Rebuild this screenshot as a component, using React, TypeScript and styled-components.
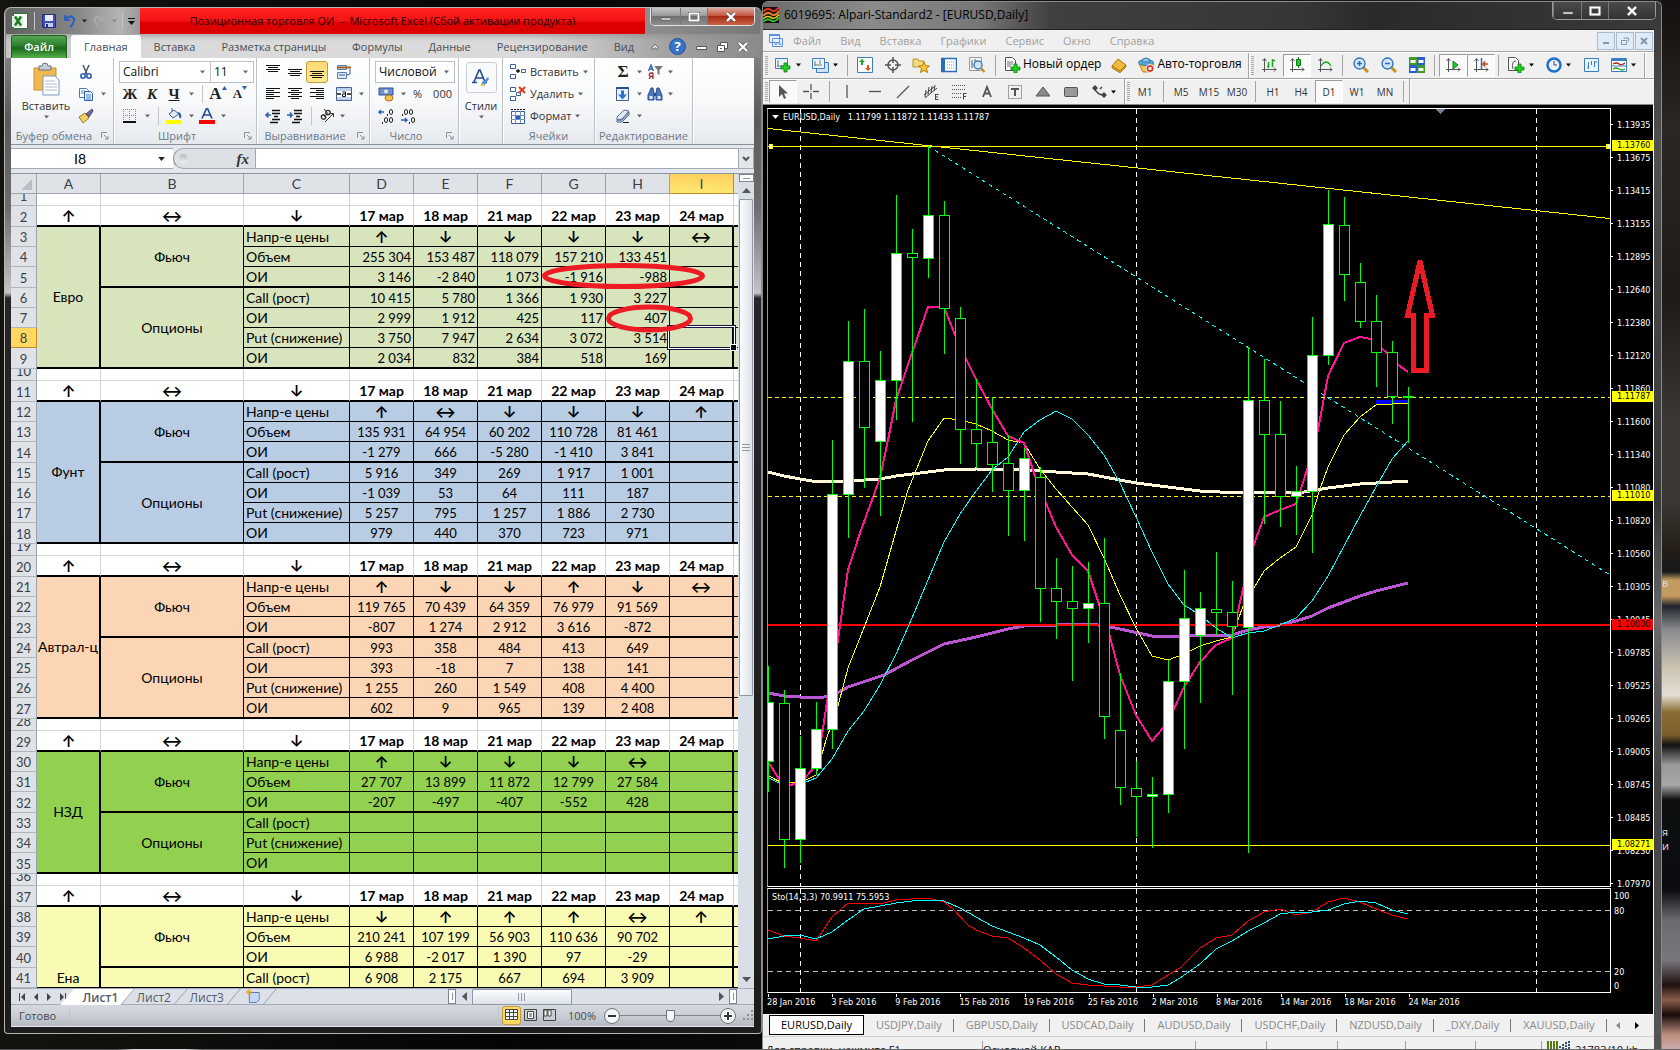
import React from 'react';
import styled, { createGlobalStyle, css } from 'styled-components';

const ui = `'Open Sans', 'Noto Sans', sans-serif`;
const sheetFont = `Lato, 'Open Sans', sans-serif`;
const chartFont = `'DejaVu Sans Condensed', 'DejaVu Sans', sans-serif`;

const GlobalStyle = createGlobalStyle`
  * { box-sizing: border-box; }
  html, body { margin: 0; padding: 0; background: #0a0a09; }
  button, input, select { font: inherit; color: inherit; margin: 0; padding: 0; border: 0; background: none; border-radius: 0; }
  svg { display: block; flex: none; }
`;

/* ---------- desktop ---------- */

const Desktop = styled.div`
  display: flex;
  flex-direction: column;
  height: 100vh;
  overflow: hidden;
  background: linear-gradient(90deg, #14130f, #050505 30%, #1d1c1a);
  font: 11px/16px ${ui};
`;
const Workspace = styled.div`
  display: flex;
  align-items: flex-start;
  flex: 1;
  min-height: 0;
  overflow: hidden;
`;
const TaskbarEdge = styled.div`
  height: 1px;
  background: linear-gradient(90deg, #555 0 7%, #ddd 8% 11%, #666 12%);
`;
const Wallpaper = styled.aside`
  display: flex;
  flex-direction: column;
  flex: 0 0 18px;
  align-self: stretch;
  overflow: hidden;
  color: #ddd;
  background: linear-gradient(180deg, #14100f 0, #2c2722 130px, #1e1b18 300px, #3a3734 420px, #3c3733 500px, #241d18 550px, #17191d 572px, #c39a60 580px, #c39a60 596px, #20242c 606px, #8b8c90 630px, #cfc6b4 670px, #e4dfd4 695px, #8a6d35 712px, #7a5d2b 735px, #111 745px, #999 765px, #a8a8a8 785px, #0d0e10 800px, #0c0d10 890px, #6a6a70 920px, #77777c 960px, #201010 985px, #8b5c4b 1000px, #160a08 1015px, #c09080 1035px, #caa);
`;
const WallpaperNote = styled.span<{ $gap: number }>`
  margin-top: ${p => p.$gap}px;
  line-height: 14px;
`;

/* ---------- excel frame ---------- */

const ExcelWindow = styled.section`
  flex: 0 0 758px;
  min-width: 0;
  margin: 7px 0 0 4px;
  padding: 0 7px 6px 6px;
  border: 1px solid #b5b5b5;
  border-right-color: #8d8d8d;
  border-radius: 7px 7px 4px 4px;
  background: linear-gradient(180deg, #777 0, #8c8c8c 30px, #5a5a5a 110px, #6d6d6d 200px, #c4c4c4 285px, #262626 290px, #1c1c1c);
`;
const ExcelTitle = styled.header`
  display: flex;
  height: 26px;
  margin: 0 -6px 0 -5px;
  padding: 0 5px 0 6px;
  border-radius: 6px 6px 0 0;
  background: linear-gradient(90deg, #5f5f5f, #8a8a8a 10%, #b4b4b4 15%, #8d8d8d 19%, #8d8d8d 86%, #777);
`;
const QuickBar = styled.div`
  display: flex;
  align-items: center;
  gap: 3px;
  flex: 0 0 128px;
`;
const RedTitle = styled.h1`
  flex: 1;
  margin: 0;
  padding-right: 20px;
  text-align: center;
  white-space: nowrap;
  font: 11px/26px ${ui};
  color: #1c0404;
  background: linear-gradient(180deg, #ff2323, #f51313 50%, #dd0000 55%, #dc0000);
`;
const CaptionButtons = styled.div`
  display: flex;
  height: 18px;
  margin-left: 5px;
  border: 1px solid #e3e3e3;
  border-top: 0;
  border-radius: 0 0 5px 5px;
  overflow: hidden;
`;
const CaptionButton = styled.button<{ $w: number; $tone?: 'red' | 'glass' }>`
  display: grid;
  place-items: center;
  width: ${p => p.$w}px;
  border-left: 1px solid #777;
  background: ${p =>
    p.$tone === 'red'
      ? 'linear-gradient(180deg, #d9a79c, #c4563f 45%, #a92a12 50%, #c8644a)'
      : p.$tone === 'glass'
      ? 'linear-gradient(180deg, #4a4a4a, #333)'
      : 'linear-gradient(180deg, #c5c5c5, #9a9a9a 45%, #707070 50%, #8e8e8e)'};
`;
const Strip = styled.nav`
  display: flex;
  align-items: flex-end;
  height: 24px;
  margin: 0 -6px 0 -5px;
  padding: 0 11px 0 5px;
  background: linear-gradient(90deg, #c6c6c6, #dadada 20%, #dadada 70%, #a2a2a2 88%, #8a8a8a);
  box-shadow: inset 0 5px 6px -4px #8d8d8d;
`;
const FileTab = styled.button`
  flex: 0 0 56px;
  height: 23px;
  border: 1px solid #1f5f20;
  border-bottom: 0;
  border-radius: 3px 3px 0 0;
  color: #fff;
  font-weight: 600;
  background: linear-gradient(180deg, #55a655, #2b7d2b 45%, #17691a 55%, #58b04a);
`;
const RibbonTab = styled.button<{ $on?: boolean }>`
  flex: none;
  height: 23px;
  padding: 0 13px;
  white-space: nowrap;
  color: #4a4e55;
  border-radius: 3px 3px 0 0;
  ${p => p.$on && css`background: #fff; margin-left: 4px;`}
`;
const StripTools = styled.div`
  display: flex;
  align-items: center;
  gap: 9px;
  height: 23px;
  margin-left: auto;
`;

/* ---------- ribbon ---------- */

const Ribbon = styled.div`
  display: flex;
  height: 87px;
  background: linear-gradient(180deg, #fff, #f8f9fb 50%, #e5e9ee);
  border-bottom: 1px solid #8b9097;
`;
const Group = styled.section<{ $w: number }>`
  display: flex;
  flex-direction: column;
  flex: 0 0 ${p => p.$w}px;
  padding-top: 3px;
  border-right: 1px solid #bcc2ca;
  box-shadow: 1px 0 0 #fff;
`;
const GroupBody = styled.div<{ $pad?: number }>`
  display: flex;
  height: 66px;
  padding-left: ${p => p.$pad ?? 5}px;
`;
const GroupLabel = styled.div`
  display: flex;
  align-items: center;
  height: 17px;
  padding: 0 4px;
  color: #6d7787;
  white-space: nowrap;
  span { flex: 1; text-align: center; }
  svg { margin-left: 8px; }
`;
const Stack = styled.div`
  display: flex;
  flex-direction: column;
`;
const Line = styled.div`
  display: flex;
  align-items: center;
  height: 22px;
`;
const IconButton = styled.button<{ $w?: number; $on?: boolean }>`
  display: flex;
  align-items: center;
  justify-content: center;
  width: ${p => p.$w ?? 22}px;
  height: 22px;
  ${p =>
    p.$on &&
    css`
      border: 1px solid #c29b3a;
      border-radius: 3px;
      background: linear-gradient(180deg, #fdd978, #ffe88c);
    `}
`;
const LetterButton = styled(IconButton)<{ $size?: number; $italic?: boolean; $under?: boolean }>`
  font: bold ${p => p.$size ?? 15}px/20px 'Liberation Serif', serif;
  font-style: ${p => (p.$italic ? 'italic' : 'normal')};
  text-decoration: ${p => (p.$under ? 'underline' : 'none')};
  color: #222;
  svg { align-self: flex-start; margin-top: 3px; }
`;
const TextButton = styled.button`
  display: flex;
  align-items: center;
  gap: 4px;
  height: 22px;
  color: #333;
  white-space: nowrap;
`;
const BigButton = styled.button<{ $w: number }>`
  display: flex;
  flex-direction: column;
  align-items: center;
  width: ${p => p.$w}px;
  color: #333;
  line-height: 18px;
`;
const StyleTile = styled.span`
  display: grid;
  place-items: center;
  width: 31px;
  height: 31px;
  margin: 1px 0 4px;
  border: 1px solid #c9ced6;
  border-radius: 3px;
  background: #f9fafc;
`;
const Rule = styled.span<{ $w?: number }>`
  width: ${p => p.$w ?? 10}px;
  height: 18px;
  background: linear-gradient(#c2c6cc, #c2c6cc) center / 1px 100% no-repeat;
`;
const Space = styled.span<{ $w: number }>`
  width: ${p => p.$w}px;
`;
const ComboBox = styled.span<{ $w: number }>`
  position: relative;
  display: flex;
  width: ${p => p.$w}px;
  height: 22px;
  border: 1px solid #bcc0c7;
  background: #fff;
  font-size: 12px;
  & + & { margin-left: -1px; }
  select { flex: 1; min-width: 0; padding-left: 3px; appearance: none; color: #111; outline: 0; }
  svg { position: absolute; right: 5px; top: 8px; pointer-events: none; }
`;

/* ---------- formula bar ---------- */

const FormulaBar = styled.div`
  display: flex;
  height: 29px;
  padding: 3px 0 4px;
  background: #e3e7f1;
  border-bottom: 1px solid #8f959e;
`;
const NameBox = styled.input`
  width: 138px;
  text-align: center;
  font: 14px/20px ${sheetFont};
  background: #fff;
  border: solid #a4a9b1;
  border-width: 1px 0;
  outline: 0;
`;
const NameArrow = styled.button`
  display: grid;
  place-items: center;
  width: 24px;
  background: #fff;
  border: solid #a4a9b1;
  border-width: 1px 0;
`;
const FxArea = styled.div`
  display: flex;
  align-items: center;
  justify-content: space-between;
  width: 83px;
  padding: 0 6px 0 2px;
  background: #dde1e6;
  border: 1px solid #a4a9b1;
  border-left-color: #8a8f98;
  border-radius: 11px 0 0 11px;
  font: italic bold 15px/20px 'Liberation Serif', serif;
  color: #333;
`;
const Bead = styled.span`
  width: 9px;
  height: 9px;
  margin-left: 3px;
  border-radius: 50%;
  background: linear-gradient(#b5b8bd, #f3f3f3);
`;
const FormulaInput = styled.input`
  flex: 1;
  min-width: 0;
  background: #fff;
  border: solid #a4a9b1;
  border-width: 1px 0;
  outline: 0;
`;
const ExpandButton = styled.button`
  display: grid;
  place-items: center;
  width: 16px;
  background: #e3e7ec;
  border: 1px solid #a4a9b1;
`;

/* ---------- sheet ---------- */

const SheetArea = styled.div`
  position: relative;
  display: flex;
  height: 814px;
  overflow: hidden;
  background: #fff;
`;
const SheetClip = styled.div`
  flex: 1;
  min-width: 0;
  overflow: hidden;
`;
const Grid = styled.table`
  width: 728px;
  table-layout: fixed;
  border-collapse: separate;
  border-spacing: 0;
  font: 14px/18px ${sheetFont};
  color: #000;
  td, th { padding: 0; }
`;
const ColHead = styled.th<{ $on?: boolean }>`
  height: 20px;
  font-weight: normal;
  color: ${p => (p.$on ? '#2c5a44' : '#3b4047')};
  background: ${p => (p.$on ? 'linear-gradient(180deg, #ffcf5c, #ffe873)' : '#dfe3e8')};
  border-right: 1px solid ${p => (p.$on ? '#c08a2c' : '#9da3ab')};
  border-bottom: 1px solid ${p => (p.$on ? '#c08a2c' : '#9da3ab')};
`;
const RowHead = styled.th<{ $h: number; $on?: boolean }>`
  height: ${p => p.$h}px;
  font-size: 13px;
  font-weight: normal;
  color: #3b4047;
  background: ${p => (p.$on ? '#ffd85f' : '#dfe3e8')};
  border-right: 1px solid ${p => (p.$on ? '#c08a2c' : '#9da3ab')};
  border-bottom: 1px solid ${p => (p.$on ? '#c08a2c' : '#b1b6bd')};
  vertical-align: bottom;
  div { display: flex; align-items: flex-end; justify-content: center; height: ${p => p.$h - 1}px; overflow: hidden; }
`;
const PlainCell = styled.td<{ $last?: boolean; $thick?: boolean; $bold?: boolean }>`
  border-right: 1px solid #d4d4d4;
  border-bottom: ${p => (p.$thick ? '2px solid #000' : '1px solid #d4d4d4')};
  ${p => p.$last && 'border-right: 0;'}
  text-align: center;
  vertical-align: bottom;
  line-height: 18px;
  font-weight: ${p => (p.$bold ? 'bold' : 'normal')};
`;
const Cell = styled.td<{ $bg: string; $align?: string; $thickBottom?: boolean; $right?: number; $valign?: string; $num?: boolean }>`
  position: relative;
  background: ${p => p.$bg};
  border-right: ${p => p.$right ?? 1}px solid #000;
  border-bottom: ${p => (p.$thickBottom ? 2 : 1)}px solid #000;
  && { padding: ${p => (p.$align === 'left' ? '0 0 0 2px' : p.$align === 'right' ? '0 2px 0 0' : '0')}; }
  text-align: ${p => p.$align ?? 'center'};
  vertical-align: ${p => p.$valign ?? 'bottom'};
  white-space: nowrap;
  ${p => p.$num && 'font-size: 13px;'}
`;
const Arrow = styled.span`
  display: block;
  font: 600 16px/18px Inter, 'DejaVu Sans', sans-serif;
`;
const CellCursor = styled.span`
  position: absolute;
  z-index: 1;
  inset: -2px -3px -2px -2px;
  border: 1px solid #fff;
  outline: 1px solid #1c1440;
  box-shadow: inset 0 0 0 1px #1c1440;
  &::after {
    content: '';
    position: absolute;
    right: -3px;
    bottom: -3px;
    width: 5px;
    height: 5px;
    background: #000;
    border: 1px solid #fff;
  }
`;
const Ink = styled.svg`
  position: absolute;
  z-index: 2;
  left: 0;
  top: 0;
  pointer-events: none;
`;
const VScroll = styled.div`
  display: flex;
  flex-direction: column;
  align-items: center;
  flex: 0 0 16px;
  background: #d9dfe9;
`;
const SplitHandle = styled.span<{ $vertical?: boolean }>`
  flex: none;
  width: ${p => (p.$vertical ? 8 : 15)}px;
  height: ${p => (p.$vertical ? 15 : 8)}px;
  border: 1px solid #7f858e;
  background: linear-gradient(#8e949e, #8e949e) center / ${p => (p.$vertical ? '1px 7px' : '7px 1px')} no-repeat #fff;
`;
const ScrollArrow = styled.button<{ $w?: number; $h?: number }>`
  display: grid;
  place-items: center;
  flex: none;
  width: ${p => p.$w ?? 16}px;
  height: ${p => p.$h ?? 17}px;
`;
const Thumb = styled.div<{ $dir: 'v' | 'h' }>`
  display: grid;
  place-items: center;
  border: 1px solid #8e97a6;
  border-radius: 1px;
  ${p =>
    p.$dir === 'v'
      ? 'width: 14px; flex: 0 0 497px; background: linear-gradient(90deg, #fbfcfd, #dde2ea);'
      : 'height: 16px; flex: 0 0 100px; background: linear-gradient(180deg, #fbfcfd, #dde2ea);'}
`;
const Filler = styled.div`
  flex: 1;
`;

const SheetBar = styled.div`
  display: flex;
  align-items: center;
  height: 17px;
  color: #555b66;
  background: #dbe0e9;
  border-top: 1px solid #a5abb5;
  border-bottom: 1px solid #a5abb5;
`;
const SheetNav = styled.div`
  display: flex;
  justify-content: space-around;
  width: 64px;
  padding: 0 5px 0 4px;
`;
const SheetTab = styled.button<{ $on?: boolean; $w?: number }>`
  flex: none;
  height: 16px;
  width: ${p => p.$w ?? 53}px;
  font-size: 12px;
  line-height: 15px;
  border-right: 1px solid #9aa0aa;
  transform: skewX(-40deg);
  ${p => p.$on && css`
    background: #fff;
    font-weight: 600;
    box-shadow: -8px 0 0 #fff;
  `}
  span { display: inline-block; transform: skewX(40deg); }
`;
const StatusBar = styled.footer`
  display: flex;
  align-items: center;
  height: 22px;
  padding-left: 8px;
  color: #444a54;
  background: linear-gradient(180deg, #d6dae0, #c9cdd4 50%, #b5bac2);
  border-bottom: 1px solid #e8eaee;
`;
const ViewButton = styled.button<{ $on?: boolean }>`
  display: grid;
  place-items: center;
  width: 19px;
  height: 19px;
  ${p => p.$on && 'background: #ffd966; border: 1px solid #c29b3a; border-radius: 3px;'}
`;
const RoundButton = styled.button`
  display: grid;
  place-items: center;
  width: 16px;
  height: 16px;
  border: 1px solid #6d737c;
  border-radius: 50%;
  background: #f3f4f6;
`;
const ZoomSlider = styled.input`
  width: 100px;
  height: 14px;
  appearance: none;
  background: linear-gradient(#80858e, #80858e) center / 100% 1px no-repeat;
  &::-webkit-slider-thumb {
    appearance: none;
    width: 9px;
    height: 12px;
    background: #f4f5f7;
    border: 1px solid #6d737c;
    border-radius: 1px 1px 5px 5px;
  }
`;

/* ---------- trading terminal ---------- */

const Terminal = styled.section`
  flex: 1;
  min-width: 0;
  margin-top: 1px;
  padding: 0 7px 0 0;
  border: 1px solid #8a8a8a;
  border-bottom: 0;
  border-radius: 6px 6px 0 0;
  background: linear-gradient(180deg, #3a3a3a, #505050 150px, #383838 500px, #6a6a6a 620px, #444 800px, #555);
`;
const TermTitle = styled.header`
  display: flex;
  align-items: flex-start;
  height: 27px;
  margin-right: -7px;
  border-radius: 5px 5px 0 0;
  background: linear-gradient(90deg, #6b6b6b 0, #8b8b8b 12%, #777 24%, #404040 32%, #363636 60%, #2a2a2a 68%, #3a3a3a);
  > svg { margin: 5px 5px 0 0; }
`;
const TermName = styled.h2`
  flex: 1;
  margin: 0;
  font: 12px/25px ${ui};
  color: #000;
`;
const TermCaption = styled(CaptionButtons)`
  margin-right: 5px;
  border-color: #9a9a9a;
`;
const Client = styled.div`
  background: #f0f0f0;
  border-top: 1px solid #222;
`;
const MenuBar = styled.nav`
  display: flex;
  align-items: center;
  height: 21px;
  padding-left: 5px;
  background: #f0f0f0;
`;
const MenuItem = styled.button`
  padding: 0 9px 0 10px;
  color: #a0a0a0;
`;
const MdiButtons = styled.div`
  display: flex;
  margin-left: auto;
`;
const MdiButton = styled.button`
  display: grid;
  place-items: center;
  width: 18px;
  height: 18px;
  margin-right: 1px;
  border: 1px solid #a9bccf;
  background: #dfebf6;
`;
const ToolRow = styled.div<{ $h: number }>`
  display: flex;
  align-items: center;
  height: ${p => p.$h}px;
  border-top: 1px solid #a5a5a5;
  box-shadow: inset 0 1px 0 #fff;
`;
const ToolGroup = styled.div`
  display: flex;
  align-items: center;
  height: 25px;
  padding-right: 2px;
  border-right: 1px solid #a5a5a5;
  box-shadow: 1px 0 0 #fff;
`;
const Grip = styled.span`
  width: 3px;
  height: 19px;
  margin: 0 1px 0 2px;
  background: repeating-linear-gradient(180deg, #a8a8a8 0 1px, #f0f0f0 1px 2px);
`;
const Tool = styled.button<{ $on?: boolean; $drop?: boolean }>`
  display: flex;
  align-items: center;
  justify-content: center;
  gap: 4px;
  width: ${p => (p.$drop ? 37 : 28)}px;
  height: 23px;
  ${p =>
    p.$on &&
    css`
      border: 1px solid;
      border-color: #9d9d9d #fff #fff #9d9d9d;
      background: #fafafa;
    `}
`;
const WideTool = styled.button`
  display: flex;
  align-items: center;
  gap: 2px;
  height: 23px;
  padding: 0 4px 3px 5px;
  font-size: 12px;
  white-space: nowrap;
  color: #000;
  svg { margin-top: 3px; }
`;
const Period = styled(Tool)`
  font: 10px/14px ${ui};
  color: #333;
`;
const ToolRule = styled.span`
  width: 8px;
  height: 21px;
  background: linear-gradient(#a5a5a5, #a5a5a5) center / 1px 100% no-repeat;
`;

/* ---------- chart ---------- */

const ChartFrame = styled.div`
  display: grid;
  grid-template-columns: minmax(0, 1fr) 42px;
  grid-template-rows: 779px 105px 20px;
  row-gap: 1px;
  padding: 3px 0 0 4px;
  color: #fff;
  background: #000;
  border-top: 1px solid #888;
  border-right: 1px solid #fff;
  font: 9px/12px ${chartFont};
`;
const Pane = styled.div`
  position: relative;
  border: 1px solid #fff;
  border-left-color: #999;
  > svg { width: 100%; height: 100%; }
`;
const PaneCaption = styled.div`
  position: absolute;
  left: 4px;
  top: 2px;
  display: flex;
  align-items: center;
  gap: 4px;
  white-space: pre;
`;
const PriceAxis = styled.div`
  position: relative;
`;
const Price = styled.div`
  display: flex;
  align-items: center;
  height: 33px;
  &::before { content: ''; width: 2px; height: 1px; margin-right: 4px; background: #fff; }
`;
const PriceTag = styled.span<{ $bg: string }>`
  position: absolute;
  left: 1px;
  right: 0;
  padding-left: 5px;
  line-height: 11px;
  color: #000;
  background: ${p => p.$bg};
`;
const LevelTag = styled.span`
  position: absolute;
  left: 3px;
`;
const DateAxis = styled.div`
  display: flex;
  line-height: 10px;
`;
const DateLabel = styled.span`
  flex: 0 0 7.6%;
  width: 0;
  white-space: nowrap;
  &::before { content: ''; display: block; width: 1px; height: 3px; margin-left: 1px; background: #fff; }
`;
const SymbolTabs = styled.nav`
  display: flex;
  align-items: stretch;
  height: 22px;
  padding-left: 6px;
  color: #8a8a8a;
  background: #f0f0f0;
  border-top: 1px solid #fff;
`;
const SymbolTab = styled.button<{ $on?: boolean }>`
  position: relative;
  flex: 0 0 auto;
  height: 20px;
  padding: 0 12px;
  ${p =>
    p.$on
      ? 'padding: 0 11px; color: #000; background: #fff; border: 1px solid #000;'
      : '&::after { content: ""; position: absolute; right: 0; top: 4px; height: 13px; width: 1px; background: #777; }'}
`;
const TermStatus = styled.footer`
  display: flex;
  height: 22px;
  padding: 4px 0 0 3px;
  line-height: 18px;
  color: #111;
  border-top: 1px solid #d0d0d0;
  white-space: nowrap;
`;
const StatusCell = styled.span<{ $w: number }>`
  display: flex;
  gap: 4px;
  flex: 0 0 ${p => p.$w}px;
  border-right: 1px solid #a0a0a0;
`;

/* ---------- icons ---------- */

const Caret = ({ c = '#666', w = 5 }: { c?: string; w?: number }) => (
  <svg width={w} height="4" viewBox="0 0 5 3"><path d="M0 0h5L2.5 3z" fill={c} /></svg>
);
const Ico = ({ s = 16, w, children }: { s?: number; w?: number; children: React.ReactNode }) => (
  <svg width={w ?? s} height={s} viewBox={`0 0 ${w ?? s} ${s}`} fill="none">{children}</svg>
);
const DropArrow = ({ w = 12 }: { w?: number }) => <IconButton $w={w} aria-label="Список"><Caret /></IconButton>;
const Launcher = () => (
  <Ico s={8}><path d="M.5 6V.5H6M3 3l4 4M7 4v3H4" stroke="#8a909a" /></Ico>
);
const Bars = ({ rows, y = 2 }: { rows: number[][]; y?: number }) => (
  <Ico s={16}>{rows.map((r, i) => <path key={i} d={`M${r[0]} ${y + i * 2 + 0.5}H${r[1]}`} stroke="#111" />)}</Ico>
);
const Axes = ({ children }: { children?: React.ReactNode }) => (
  <Ico s={16}><path d="M3.5 2v13M1 12.5h14M1.5 4l2-2.5 2 2.5M13 10.5l2 2-2 2" stroke="#555" />{children}</Ico>
);
const Plus = ({ x, y }: { x: number; y: number }) => (
  <path d={`M${x} ${y}h3v3h3v3h-3v3h-3v-3h-3v-3h3z`} fill="#22d022" stroke="#0b7d14" strokeWidth=".8" />
);
const WinMin = () => <Ico s={8} w={12}><path d="M1 5h10v2H1z" fill="#fff" stroke="#555" strokeWidth=".7" /></Ico>;
const WinMax = () => <Ico s={10} w={12}><path d="M1.5 1.5h9v7h-9z" stroke="#555" strokeWidth="3" /><path d="M1.5 1.5h9v7h-9z" stroke="#fff" strokeWidth="2" /></Ico>;
const WinClose = () => <Ico s={10} w={12}><path d="M2 1l8 8M10 1l-8 8" stroke="#555" strokeWidth="3.6" /><path d="M2 1l8 8M10 1l-8 8" stroke="#fff" strokeWidth="2.4" /></Ico>;

/* ---------- sheet data ---------- */

type Row = { label: string; v: string[]; };
type Block = { name: string; bg: string; align: 'right' | 'center'; rows: Row[]; };
const days = ['17 мар', '18 мар', '21 мар', '22 мар', '23 мар', '24 мар'];
const r = (label: string, s = ''): Row => ({ label, v: s ? s.split('|') : ['', '', '', '', '', ''] });
const blocks: Block[] = [
  { name: 'Евро', bg: '#d8e4bc', align: 'right', rows: [
    r('Напр-е цены', '↑|↓|↓|↓|↓|↔'), r('Объем', '255 304|153 487|118 079|157 210|133 451|'), r('ОИ', '3 146|-2 840|1 073|-1 916|-988|'),
    r('Call (рост)', '10 415|5 780|1 366|1 930|3 227|'), r('ОИ', '2 999|1 912|425|117|407|'), r('Put (снижение)', '3 750|7 947|2 634|3 072|3 514|'), r('ОИ', '2 034|832|384|518|169|')] },
  { name: 'Фунт', bg: '#b8cce4', align: 'center', rows: [
    r('Напр-е цены', '↑|↔|↓|↓|↓|↑'), r('Объем', '135 931|64 954|60 202|110 728|81 461|'), r('ОИ', '-1 279|666|-5 280|-1 410|3 841|'),
    r('Call (рост)', '5 916|349|269|1 917|1 001|'), r('ОИ', '-1 039|53|64|111|187|'), r('Put (снижение)', '5 257|795|1 257|1 886|2 730|'), r('ОИ', '979|440|370|723|971|')] },
  { name: 'Автрал-ц', bg: '#fcd5b4', align: 'center', rows: [
    r('Напр-е цены', '↑|↓|↓|↑|↓|↔'), r('Объем', '119 765|70 439|64 359|76 979|91 569|'), r('ОИ', '-807|1 274|2 912|3 616|-872|'),
    r('Call (рост)', '993|358|484|413|649|'), r('ОИ', '393|-18|7|138|141|'), r('Put (снижение)', '1 255|260|1 549|408|4 400|'), r('ОИ', '602|9|965|139|2 408|')] },
  { name: 'НЗД', bg: '#92d050', align: 'center', rows: [
    r('Напр-е цены', '↑|↓|↓|↓|↔|'), r('Объем', '27 707|13 899|11 872|12 799|27 584|'), r('ОИ', '-207|-497|-407|-552|428|'),
    r('Call (рост)'), r('Put (снижение)'), r('ОИ')] },
  { name: 'Ена', bg: '#fafbb3', align: 'center', rows: [
    r('Напр-е цены', '↓|↑|↑|↑|↔|↑'), r('Объем', '210 241|107 199|56 903|110 636|90 702|'), r('ОИ', '6 988|-2 017|1 390|97|-29|'),
    r('Call (рост)', '6 908|2 175|667|694|3 909|')] },
];

const NumHead = ({ n, h }: { n: number; h: number }) => (
  <RowHead scope="row" $h={h} $on={n === 8}><div>{n}</div></RowHead>
);

function SheetBlock({ b, start, partial }: { b: Block; start: number; partial?: boolean }) {
  const total = b.rows.length;
  return (
    <>
      <tr><NumHead n={start} h={12} />{Array.from({ length: 10 }, (_, i) => <PlainCell key={i} $last={i === 9} />)}</tr>
      <tr>
        <NumHead n={start + 1} h={21} />
        {['↑', '↔', '↓'].map(a => <PlainCell key={a} $thick><Arrow>{a}</Arrow></PlainCell>)}
        {days.map(d => <PlainCell key={d} $thick $bold>{d}</PlainCell>)}
        <PlainCell $thick $last />
      </tr>
      {b.rows.map((row, i) => {
        const thick = i === 2 || (!partial && i === total - 1);
        return (
          <tr key={i}>
            <NumHead n={start + 2 + i} h={thick ? 21 : 20} />
            {i === 0 && <Cell $bg={b.bg} rowSpan={total} $right={2} $thickBottom={!partial} $valign={partial ? 'bottom' : 'middle'}>{b.name}</Cell>}
            {i === 0 && <Cell $bg={b.bg} rowSpan={3} $thickBottom $valign="middle">Фьюч</Cell>}
            {i === 3 && <Cell $bg={b.bg} rowSpan={total - 3} $thickBottom={!partial} $valign="middle">{partial ? '' : 'Опционы'}</Cell>}
            <Cell $bg={b.bg} $align="left" $thickBottom={thick}>{row.label}</Cell>
            {row.v.map((v, c) => (
              <Cell key={c} $num $bg={b.bg} $align={i === 0 ? 'center' : b.align} $thickBottom={thick} $right={c === 5 ? 2 : 1}>
                {i === 0 && v ? <Arrow>{v}</Arrow> : v}
                {start + 2 + i === 8 && c === 5 && <CellCursor />}
              </Cell>
            ))}
            <Cell $bg={b.bg} $thickBottom={thick} $right={0} />
          </tr>
        );
      })}
    </>
  );
}

/* ---------- chart data: [wick top, wick bottom, body top, body bottom, rising] ---------- */

const candles: [number, number, number, number, number][] = [
  [666, 792, 702, 761, 1], [690, 868, 703, 839, 0], [736, 863, 768, 839, 1], [702, 775, 729, 768, 1], [440, 749, 494, 729, 1],
  [321, 538, 361, 494, 1], [309, 488, 361, 427, 0], [351, 516, 380, 441, 1], [195, 420, 253, 380, 1], [229, 422, 253, 257, 0],
  [146, 278, 215, 258, 1], [201, 354, 215, 308, 0], [307, 464, 318, 429, 0], [379, 468, 429, 443, 0], [397, 492, 442, 464, 0],
  [435, 536, 463, 490, 0], [448, 541, 458, 490, 1], [467, 622, 477, 588, 0], [558, 639, 588, 601, 0], [566, 681, 601, 608, 0],
  [562, 643, 603, 608, 1], [538, 739, 603, 716, 0], [673, 805, 730, 787, 0], [761, 837, 788, 796, 0], [777, 848, 794, 796, 1],
  [660, 813, 681, 794, 1], [570, 749, 618, 681, 1], [592, 703, 608, 635, 1], [552, 635, 609, 612, 0], [581, 695, 612, 626, 0],
  [347, 853, 400, 627, 1], [359, 524, 400, 434, 0], [401, 527, 434, 496, 0], [466, 535, 491, 496, 1], [317, 553, 355, 491, 1],
  [190, 365, 224, 355, 1], [197, 301, 225, 274, 0], [263, 328, 282, 321, 0], [295, 387, 321, 352, 0], [341, 424, 352, 396, 0],
  [387, 443, 396, 397, 0],
];
const purple = '768,693 784,696 800,697 816,698 832,696 848,687 884,675 912,660 944,644 976,637 1008,629 1024,626 1056,625 1072,624 1092,624 1104,626 1120,629 1152,636 1190,636 1216,635 1232,635 1248,630 1264,627 1280,625 1296,621 1312,616 1328,608 1344,602 1360,596 1376,591 1392,587 1408,583';
const cream = '768,472 784,476 800,479 812,481 848,481 880,479 896,476 912,474 944,470 976,469 1024,470 1056,472 1088,474 1104,477 1136,483 1168,487 1200,491 1240,493 1264,492 1304,492 1328,488 1360,484 1408,481';
const pink = '769,763 779,779 790,785 800,783 816,766 822,735 827,702 838,640 848,570 860,533 880,478 888,440 896,400 912,353 928,307 944,307 955,335 965,357 976,379 992,409 1008,436 1024,443 1035,476 1048,508 1056,527 1072,555 1088,571 1099,604 1110,637 1120,675 1136,715 1152,741 1163,728 1174,709 1184,687 1200,662 1216,645 1232,638 1240,602 1254,544 1264,517 1280,510 1296,504 1307,470 1318,430 1328,376 1344,343 1360,337 1371,339 1387,353 1397,364 1408,372';
const yellow = '769,776 784,784 806,780 816,775 826,740 838,706 848,668 865,625 880,587 896,531 908,490 928,441 944,418 960,420 976,424 992,431 1008,440 1024,443 1040,469 1056,489 1072,507 1088,525 1104,558 1120,595 1136,628 1152,656 1168,660 1184,654 1200,646 1216,641 1232,637 1243,606 1254,588 1264,571 1280,558 1296,547 1312,515 1320,489 1328,467 1344,435 1360,417 1376,405 1392,404 1408,402';
const cyan = '769,778 779,783 806,782 816,778 832,759 848,731 864,711 880,685 896,654 912,618 928,580 944,542 960,514 976,491 992,470 1008,457 1024,432 1040,420 1056,411 1072,419 1088,435 1104,455 1120,483 1136,517 1152,552 1168,584 1184,605 1200,615 1216,628 1232,638 1248,633 1264,631 1280,625 1296,618 1312,601 1328,576 1344,546 1360,516 1376,487 1392,459 1408,441';
const stoRed = '768,930 784,936 800,938 816,941 832,917 848,903 864,903 880,904 896,900 912,899 928,898 944,902 952,908 968,925 976,930 992,936 1008,938 1024,948 1040,960 1056,974 1072,983 1088,985 1104,986 1120,987 1136,987 1152,985 1168,975 1180,968 1200,948 1216,938 1232,935 1248,921 1264,912 1280,909 1296,915 1312,912 1328,902 1344,898 1360,902 1376,909 1392,915 1408,919';
const stoCyan = '768,939 784,936 800,935 816,939 832,932 848,920 864,909 880,906 896,903 912,901 928,900 944,901 960,908 976,917 992,926 1008,932 1024,938 1040,945 1056,957 1072,970 1088,979 1104,984 1120,985 1136,987 1152,987 1168,985 1180,978 1200,964 1216,949 1232,941 1248,931 1264,923 1280,914 1296,912 1312,912 1328,910 1344,904 1360,901 1376,903 1392,910 1408,914';
const prices = '13935 13675 13415 13155 12895 12640 12380 12120 11860 11600 11340 11080 10820 10560 10305 10045 09785 09525 09265 09005 08745 08485 08230 07970'.split(' ');
const dates = ['28 Jan 2016', '3 Feb 2016', '9 Feb 2016', '15 Feb 2016', '19 Feb 2016', '25 Feb 2016', '2 Mar 2016', '8 Mar 2016', '14 Mar 2016', '18 Mar 2016', '24 Mar 2016'];
const tags: [string, number, string][] = [['1.13760', 32, '#ff0'], ['1.11787', 283, '#ff0'], ['1.11010', 382, '#ff0'], ['1.10000', 511, '#f00'], ['1.08271', 731, '#ff0']];
const levels: [string, number][] = [['100', 2], ['80', 17], ['20', 78], ['0', 92]];

function PriceChart() {
  return (
    <svg viewBox="768 109 842 777" preserveAspectRatio="none" shapeRendering="crispEdges" fill="none" role="img" aria-label="EURUSD, Daily">
      {[800.5, 1136.5, 1536.5].map(x => <path key={x} d={`M${x} 109V886`} stroke="#fff" strokeDasharray="5 4" />)}
      <polyline points={cream} stroke="#fff8d8" strokeWidth="3" />
      <polyline points={purple} stroke="#ba55d3" strokeWidth="3" />
      <path d="M768 625H1610" stroke="#f00" strokeWidth="2" />
      <polyline points={cyan} stroke="#0ff" />
      <polyline points={yellow} stroke="#ff0" />
      <polyline points={pink} stroke="#ff1493" strokeWidth="2" />
      <path d="M768 397.5H1610M768 496.5H1610" stroke="#ff0" strokeDasharray="4 3" />
      <path d="M768 146.5H1610M768 845.5H1610M768 128.5L1610 218.5" stroke="#ff0" />
      <path d="M928 146L1610 575" stroke="#0ff" strokeDasharray="4 4" />
      <path d="M1376 402H1408" stroke="#00f" strokeWidth="4" />
      {candles.map(([t, b, o, c, up], i) => {
        const x = 768.5 + i * 16;
        return (
          <g key={i} stroke="#0f0">
            <path d={`M${x} ${t}V${b}`} />
            <rect x={x - 5} y={o + 0.5} width="10" height={c - o} fill={up ? '#fff' : '#000'} />
          </g>
        );
      })}
      <path d="M1376 405L1408 403" stroke="#ff0" />
      <path d="M769 144h3v4h-3zM1606 144h3v4h-3z" fill="#fff" stroke="#ff0" />
      <path d="M1436 109h9l-4.5 5z" fill="#708090" />
      <path d="M1420 261L1407.5 315.5H1413.5V370.5H1426.5V315.5H1432.5Z" stroke="#ed1c24" strokeWidth="5" />
    </svg>
  );
}

/* ---------- application windows ---------- */

function ExcelRibbon() {
  return (
    <Ribbon>
      <Group $w={103}>
        <GroupBody $pad={6}>
          <BigButton $w={58}>
            <Ico s={36} w={30}>
              <path d="M3 7h22v22H3z" fill="#f0b84e" stroke="#c98f35" /><path d="M8 5h3a3 3 0 016 0h3v4H8z" fill="#c9ced6" stroke="#6b7280" />
              <path d="M12 15h12l4 4v15H12z" fill="#fff" stroke="#7c9ac0" /><path d="M14 20h10M14 23h12M14 26h12M14 29h12" stroke="#a9bcd6" />
            </Ico>
            Вставить<Caret />
          </BigButton>
          <Stack>
            <Line><IconButton aria-label="Вырезать"><Ico><path d="M5 1l4 9M11 1L7 10" stroke="#44546e" strokeWidth="1.5" /><circle cx="5" cy="12" r="2.2" stroke="#2b5fb5" strokeWidth="1.6" /><circle cx="11" cy="12" r="2.2" stroke="#2b5fb5" strokeWidth="1.6" /></Ico></IconButton></Line>
            <Line><IconButton aria-label="Копировать"><Ico><path d="M1.5 2.5h7l2 2v7h-9z" fill="#fff" stroke="#4b78b8" /><path d="M6.5 5.5h6l2 2v7h-8z" fill="#e4eefb" stroke="#2b5fb5" /><path d="M8 9h5M8 11h5M8 13h5M3 5h4M3 7h3" stroke="#5a86c4" /></Ico></IconButton><DropArrow /></Line>
            <Line><IconButton aria-label="Формат по образцу"><Ico><path d="M1 9l6-4 4 5-6 5z" fill="#f2d06a" stroke="#9c7a20" /><path d="M8 6l6-5 1 2-4 6z" fill="#7a6a9c" stroke="#4f4570" /></Ico></IconButton></Line>
          </Stack>
        </GroupBody>
        <GroupLabel><span>Буфер обмена</span><Launcher /></GroupLabel>
      </Group>

      <Group $w={143}>
        <GroupBody>
          <Stack>
            <Line>
              <ComboBox $w={92}><select aria-label="Шрифт"><option>Calibri</option></select><Caret /></ComboBox>
              <ComboBox $w={44}><select aria-label="Размер шрифта"><option>11</option></select><Caret /></ComboBox>
            </Line>
            <Line>
              <LetterButton>Ж</LetterButton><LetterButton $italic>К</LetterButton><LetterButton $under>Ч</LetterButton><DropArrow />
              <Rule /><LetterButton $size={17}>A<Ico s={5}><path d="M0 4h5L2.5 0z" fill="#2b5fb5" /></Ico></LetterButton><LetterButton $size={13}>A<Ico s={5}><path d="M0 0h5L2.5 4z" fill="#2b5fb5" /></Ico></LetterButton>
            </Line>
            <Line>
              <IconButton aria-label="Границы"><Ico><path d="M1.5 1v13M13.5 1v13M7.5 1v13M1 1.5h13M1 7.5h13" stroke="#888" strokeDasharray="1 1" /><path d="M1 14h13" stroke="#111" strokeWidth="2" /></Ico></IconButton><DropArrow />
              <Rule /><IconButton aria-label="Цвет заливки"><Ico><path d="M3 6l5-4 5 4-6 4z" fill="#dfe9f6" stroke="#46618c" /><path d="M12 5q3 1 2 5" stroke="#2b5fb5" strokeWidth="2" /><path d="M6 4V0" stroke="#46618c" /><path d="M0 12h16v4H0z" fill="#ff0" /></Ico></IconButton><DropArrow />
              <IconButton aria-label="Цвет текста" $w={20}><Ico><path d="M3 10.5L7.5.5h1L13 10.5M5 7h6" stroke="#2a4f91" strokeWidth="1.7" /><path d="M0 12h16v4H0z" fill="#f00" /></Ico></IconButton><DropArrow />
            </Line>
          </Stack>
        </GroupBody>
        <GroupLabel><span>Шрифт</span><Launcher /></GroupLabel>
      </Group>

      <Group $w={113}>
        <GroupBody>
          <Stack>
            <Line>
              <IconButton aria-label="По верхнему краю"><Bars rows={[[1, 15], [3, 13], [1, 15], [3, 13]]} y={1} /></IconButton>
              <IconButton aria-label="По середине"><Bars rows={[[1, 15], [3, 13], [1, 15], [3, 13]]} y={5} /></IconButton>
              <IconButton $on aria-label="По нижнему краю"><Bars rows={[[1, 15], [3, 13], [1, 15], [3, 13]]} y={7} /></IconButton>
              <Space $w={5} />
              <IconButton aria-label="Перенос текста"><Ico><path d="M1.5 1.5h9v4h-9zM1.5 8.5h9v6h-9z" stroke="#5b7fb5" fill="#dfe9f6" /><path d="M1 3.5h14" stroke="#a35c2a" strokeWidth="2" /><path d="M14 5v5l-3 1M3 11h6" stroke="#2b5fb5" /></Ico></IconButton>
            </Line>
            <Line>
              <IconButton aria-label="По левому краю"><Bars rows={[[1, 15], [1, 9], [1, 15], [1, 9], [1, 15], [1, 9]]} /></IconButton>
              <IconButton aria-label="По центру"><Bars rows={[[1, 15], [4, 12], [1, 15], [4, 12], [1, 15], [4, 12]]} /></IconButton>
              <IconButton aria-label="По правому краю"><Bars rows={[[1, 15], [7, 15], [1, 15], [7, 15], [1, 15], [7, 15]]} /></IconButton>
              <Space $w={5} />
              <IconButton aria-label="Объединить"><Ico><path d="M.5 1.5h15v13H.5z" fill="#bcd0ea" stroke="#46618c" /><path d="M1 5h14v6H1z" fill="#fff" /><path d="M1 8h4M11 8h4" stroke="#111" strokeWidth="1.5" /><path d="M6.5 6h3v4.5h-3V8h3" stroke="#111" /></Ico></IconButton><DropArrow />
            </Line>
            <Line>
              <IconButton aria-label="Уменьшить отступ"><Ico><path d="M7 2.5h8M7 5.5h8M9 8.5h4M7 11.5h8M5 14.5h8" stroke="#111" strokeWidth="1.5" /><path d="M6 7H1l2.5-2.5M1 7l2.5 2.5" stroke="#2b5fb5" strokeWidth="1.5" /></Ico></IconButton>
              <IconButton aria-label="Увеличить отступ"><Ico><path d="M7 2.5h8M7 5.5h8M9 8.5h4M7 11.5h8M5 14.5h8" stroke="#111" strokeWidth="1.5" /><path d="M0 7h5L3 4.5M5 7L3 9.5" stroke="#2b5fb5" strokeWidth="1.5" /></Ico></IconButton>
              <Rule /><IconButton aria-label="Ориентация"><Ico><circle cx="4.5" cy="9" r="2.2" stroke="#333" strokeWidth="1.3" /><circle cx="9" cy="4.5" r="2.2" stroke="#333" strokeWidth="1.3" /><path d="M6 14l8-8M11 5.5h3.5V9M4 6l3 4M5 1l5 6" stroke="#333" /></Ico></IconButton><DropArrow w={8} />
            </Line>
          </Stack>
        </GroupBody>
        <GroupLabel><span>Выравнивание</span><Launcher /></GroupLabel>
      </Group>

      <Group $w={89}>
        <GroupBody>
          <Stack>
            <Line><ComboBox $w={80}><select aria-label="Числовой формат"><option>Числовой</option></select><Caret /></ComboBox></Line>
            <Line>
              <IconButton aria-label="Финансовый формат"><Ico><path d="M1 2h14v7H1z" fill="#6f93c9" stroke="#2a4f91" /><circle cx="8" cy="5.5" r="2" fill="#dfe9f6" /><ellipse cx="11" cy="12" rx="4" ry="3" fill="#f2c14e" stroke="#a8741a" /></Ico></IconButton><DropArrow />
              <Space $w={4} /><TextButton>%</TextButton><Space $w={11} /><TextButton>000</TextButton>
            </Line>
            <Line>
              <IconButton aria-label="Увеличить разрядность"><Ico><path d="M6 4H1l2-2M1 4l2 2" stroke="#2b5fb5" strokeWidth="1.3" /><ellipse cx="13" cy="4" rx="1.6" ry="2.5" stroke="#222" /><ellipse cx="8" cy="12" rx="1.6" ry="2.5" stroke="#222" /><ellipse cx="13" cy="12" rx="1.6" ry="2.5" stroke="#222" /><path d="M9.5 6v2M4.5 14v2" stroke="#222" /></Ico></IconButton>
              <IconButton aria-label="Уменьшить разрядность"><Ico><path d="M1 12h6l-2-2M7 12l-2 2" stroke="#2b5fb5" strokeWidth="1.3" /><ellipse cx="6" cy="4" rx="1.6" ry="2.5" stroke="#222" /><ellipse cx="11" cy="4" rx="1.6" ry="2.5" stroke="#222" /><ellipse cx="13" cy="12" rx="1.6" ry="2.5" stroke="#222" /><path d="M2.5 6v2M9.5 14v2" stroke="#222" /></Ico></IconButton>
            </Line>
          </Stack>
        </GroupBody>
        <GroupLabel><span>Число</span><Launcher /></GroupLabel>
      </Group>

      <Group $w={44}>
        <GroupBody $pad={4}>
          <BigButton $w={36}>
            <StyleTile><Ico s={20}><path d="M3 14L8 2h1l5 12M5 10h7M1 14.5h5M11 14.5h5" stroke="#2a4f91" strokeWidth="1.7" /><path d="M10 16l7-7 1 2-5 7z" fill="#4b8be0" /><path d="M9 18q2-4 4-2t-4 2z" fill="#f2c14e" /></Ico></StyleTile>
            Стили<Caret />
          </BigButton>
        </GroupBody>
      </Group>

      <Group $w={92}>
        <GroupBody $pad={7}>
          <Stack>
            <TextButton><Ico><path d="M.5.5h5v4h-5zM.5 10.5h5v4h-5zM11.5 5.5h4v3h-4z" fill="#fff" stroke="#3a5f9a" /><path d="M10 7H6M8 5v4" stroke="#111" strokeWidth="1.3" /></Ico>Вставить<Caret /></TextButton>
            <TextButton><Ico><path d="M.5 1.5h5v4h-5zM.5 10.5h5v4h-5zM6.5 6.5h4v3h-4z" fill="#fff" stroke="#3a5f9a" /><path d="M9 1l6 6M15 1L9 7" stroke="#e03a1a" strokeWidth="2" /></Ico>Удалить<Caret /></TextButton>
            <TextButton><Ico><path d="M1.5 3.5h13v12h-13z" fill="#fff" stroke="#3a5f9a" /><path d="M5.5 3v12M10.5 3v12M1 7.5h14M1 11.5h14" stroke="#6f93c9" /><path d="M6 8h4v3H6z" fill="#2b5fb5" /><path d="M1 1.5h14" stroke="#111" strokeDasharray="2 1" /></Ico>Формат<Caret /></TextButton>
          </Stack>
        </GroupBody>
        <GroupLabel><span>Ячейки</span></GroupLabel>
      </Group>

      <Group $w={95}>
        <GroupBody $pad={17}>
          <Stack>
            <Line>
              <LetterButton $size={17}>Σ</LetterButton><DropArrow w={10} />
              <IconButton aria-label="Сортировка"><Ico><path d="M1.5 7L4 1l2.5 6M2.5 5h3" stroke="#2b5fb5" strokeWidth="1.3" /><path d="M6 9v6M6 9H4a1.5 1.5 0 000 3.5h2M4 12l-2 3" stroke="#9c2a2a" strokeWidth="1.3" /><path d="M7 2h9l-3.5 4v5l-2-1V6z" fill="#777" /></Ico></IconButton><DropArrow w={8} />
            </Line>
            <Line>
              <IconButton aria-label="Заполнить"><Ico><path d="M1.5 1.5h12v13h-12z" fill="#eaf2fc" stroke="#46618c" /><path d="M1.5 2h12" stroke="#2a4f91" strokeWidth="2" /><path d="M6 4.5h3v4h3l-4.5 5L3 8.5h3z" fill="#2b6fd6" /></Ico></IconButton><DropArrow w={10} />
              <IconButton aria-label="Найти и выделить"><Ico><path d="M2 7l2-5h2l1 5v7H1V9zM9 7l1-5h2l2 5 1 2v5H9z" fill="#4b78b8" stroke="#2a4f91" /><path d="M7 7h2v3H7z" fill="#2a4f91" /><path d="M2.5 10h3v3h-3zM10.5 10h3v3h-3z" fill="#dfe9f6" /></Ico></IconButton><DropArrow w={8} />
            </Line>
            <Line>
              <IconButton aria-label="Очистить"><Ico><path d="M2 9l7-7 5 1-7 8-5 1z" fill="#dfe9f6" stroke="#5b6f8f" /><path d="M2 12h5l7-8v3l-7 7H2z" fill="#a9bcd6" stroke="#5b6f8f" /><path d="M8 14.5h6" stroke="#222" /></Ico></IconButton><DropArrow w={10} />
            </Line>
          </Stack>
        </GroupBody>
        <GroupLabel><span>Редактирование</span></GroupLabel>
      </Group>
    </Ribbon>
  );
}

function Excel() {
  return (
    <ExcelWindow>
      <ExcelTitle>
        <QuickBar>
          <Ico><path d="M1.5.5h14v15h-14z" fill="#fff" stroke="#1f7a2b" /><path d="M0 3h11v11H0z" fill="#d9efd9" /><path d="M3 3.5l6 9M9 3.5l-6 9" stroke="#1f7a2b" strokeWidth="2.4" /></Ico>
          <Rule $w={7} />
          <Ico><path d="M1.5 1.5h13v13h-13z" fill="#3d4fb8" stroke="#232f80" /><path d="M4 2h8v6H4z" fill="#e8ecfa" /><path d="M4 10h8v4H4z" fill="#c5cbe8" /><path d="M5 11h2v3H5z" fill="#232f80" /></Ico>
          <Ico w={19}><path d="M5 2v5h5M5.5 6.5C8 2 15 3 14 8q-1 4-4 6" stroke="#2f62c0" strokeWidth="2.2" /></Ico>
          <Caret c="#222" />
          <Ico w={19}><path d="M14 2v5H9M13.5 6.5C11 2 4 3 5 8q1 4 4 6" stroke="#a9a9a9" strokeWidth="2.2" /></Ico>
          <Caret c="#888" />
          <Rule $w={5} />
          <Ico s={8} w={7}><path d="M0 1.5h7" stroke="#111" /><path d="M0 4h7L3.5 8z" fill="#111" /></Ico>
        </QuickBar>
        <RedTitle>Позиционная торговля ОИ&nbsp; -&nbsp; Microsoft Excel (Сбой активации продукта)</RedTitle>
        <CaptionButtons>
          <CaptionButton $w={29} aria-label="Свернуть"><WinMin /></CaptionButton>
          <CaptionButton $w={27} aria-label="Развернуть"><WinMax /></CaptionButton>
          <CaptionButton $w={47} $tone="red" aria-label="Закрыть"><WinClose /></CaptionButton>
        </CaptionButtons>
      </ExcelTitle>
      <Strip>
        <FileTab>Файл</FileTab>
        <RibbonTab $on>Главная</RibbonTab>
        {['Вставка', 'Разметка страницы', 'Формулы', 'Данные', 'Рецензирование', 'Вид'].map(t => <RibbonTab key={t}>{t}</RibbonTab>)}
        <StripTools>
          <Ico s={10}><path d="M1.5 6L5 2.5 8.5 6 7 7.5l-2-2-2 2z" fill="#fff" stroke="#555" /></Ico>
          <svg width="17" height="17" viewBox="0 0 17 17"><circle cx="8.5" cy="8.5" r="8" fill="#3a74c8" stroke="#2452a0" /><text x="8.5" y="13" textAnchor="middle" fontSize="13" fontWeight="bold" fill="#fff">?</text></svg>
          <Ico s={12}><path d="M1.5 5.5h10v3h-10z" fill="#fff" stroke="#555" /></Ico>
          <Ico s={12}><path d="M4.5 1.5h7v6h-7z" fill="#fff" stroke="#555" /><path d="M1.5 4.5h7v6h-7z" fill="#fff" stroke="#555" /><path d="M4 7h2v1H4z" fill="#555" /></Ico>
          <WinClose />
        </StripTools>
      </Strip>
      <ExcelRibbon />
      <FormulaBar>
        <NameBox aria-label="Имя ячейки" defaultValue="I8" />
        <NameArrow aria-label="Список имён"><Caret c="#222" w={7} /></NameArrow>
        <FxArea><Bead /><span>fx</span></FxArea>
        <FormulaInput aria-label="Строка формул" />
        <ExpandButton aria-label="Развернуть строку формул"><Ico s={8}><path d="M1 2l3 3 3-3" stroke="#555" strokeWidth="2" /></Ico></ExpandButton>
      </FormulaBar>
      <SheetArea>
        <SheetClip>
          <Grid>
            <colgroup>
              <col style={{ width: 26 }} /><col style={{ width: 64 }} /><col style={{ width: 143 }} /><col style={{ width: 106 }} />
              {days.map(d => <col key={d} style={{ width: 64 }} />)}
              <col style={{ width: 5 }} />
            </colgroup>
            <thead>
              <tr>
                <ColHead aria-label="Выделить всё"><svg width="24" height="18" viewBox="0 0 24 18"><path d="M21 4v11H10z" fill="#b9bec6" /></svg></ColHead>
                {'ABCDEFGHI'.split('').map(c => <ColHead key={c} scope="col" $on={c === 'I'}>{c}</ColHead>)}
                <ColHead />
              </tr>
            </thead>
            <tbody>
              {blocks.map((b, i) => <SheetBlock key={b.name} b={b} start={[1, 10, 19, 28, 36][i]} partial={i === 4} />)}
            </tbody>
          </Grid>
        </SheetClip>
        <VScroll>
          <SplitHandle />
          <ScrollArrow aria-label="Вверх"><svg width="9" height="5" viewBox="0 0 9 5"><path d="M0 5h9L4.5 0z" fill="#555" /></svg></ScrollArrow>
          <Thumb $dir="v"><Ico s={8}><path d="M0 .5h8M0 3.5h8M0 6.5h8" stroke="#8e97a6" /></Ico></Thumb>
          <Filler />
          <ScrollArrow aria-label="Вниз"><svg width="9" height="5" viewBox="0 0 9 5"><path d="M0 0h9L4.5 5z" fill="#555" /></svg></ScrollArrow>
        </VScroll>
        <Ink width="744" height="240" viewBox="11 174 744 240" fill="none" stroke="#ed1c24" strokeWidth="5">
          <ellipse cx="623.5" cy="276" rx="79" ry="10.5" />
          <ellipse cx="649.5" cy="318.5" rx="41" ry="11.5" />
        </Ink>
      </SheetArea>
      <SheetBar>
        <SheetNav>
          <Ico s={8}><path d="M1.5 0v8" stroke="#444" /><path d="M7 0v8L3 4z" fill="#444" /></Ico>
          <Ico s={8}><path d="M6 0v8L2 4z" fill="#444" /></Ico>
          <Ico s={8}><path d="M2 0v8l4-4z" fill="#444" /></Ico>
          <Ico s={8}><path d="M6.5 0v8" stroke="#444" /><path d="M1 0v8l4-4z" fill="#444" /></Ico>
        </SheetNav>
        <SheetTab $on><span>Лист1</span></SheetTab>
        <SheetTab><span>Лист2</span></SheetTab>
        <SheetTab><span>Лист3</span></SheetTab>
        <SheetTab $w={36} aria-label="Вставить лист"><span><Ico s={14}><path d="M3.5 3.5h10v7l-3 3h-7z" fill="#c5d8f2" stroke="#5b7fb5" /><path d="M3 0v6M0 3h6M1 1l4 4M5 1L1 5" stroke="#f0a020" /></Ico></span></SheetTab>
        <Filler />
        <SplitHandle $vertical />
        <ScrollArrow aria-label="Влево" $h={15}><svg width="5" height="9" viewBox="0 0 5 9"><path d="M5 0v9L0 4.5z" fill="#555" /></svg></ScrollArrow>
        <Thumb $dir="h"><Ico s={8}><path d="M.5 0v8M3.5 0v8M6.5 0v8" stroke="#8e97a6" /></Ico></Thumb>
        <Space $w={141} />
        <ScrollArrow aria-label="Вправо" $h={15}><svg width="5" height="9" viewBox="0 0 5 9"><path d="M0 0v9l5-4.5z" fill="#555" /></svg></ScrollArrow>
        <SplitHandle $vertical />
        <Space $w={17} />
      </SheetBar>
      <StatusBar>
        Готово<Space $w={8} /><Rule />
        <Filler />
        <Rule $w={8} />
        <ViewButton $on aria-label="Обычный"><Ico s={13}><path d="M.5.5h12v10H.5zM.5 3.5h12M.5 7.5h12M4.5.5v10M8.5.5v10" stroke="#444" fill="#fff" /></Ico></ViewButton>
        <ViewButton aria-label="Разметка страницы"><Ico s={13}><path d="M.5.5h12v11H.5z" stroke="#444" /><path d="M3.5 2.5h6v7h-6z" fill="#fff" stroke="#444" /><path d="M5 5h3M5 7h3" stroke="#444" /></Ico></ViewButton>
        <ViewButton aria-label="Страничный режим"><Ico s={13}><path d="M.5.5h12v11H.5z" stroke="#444" fill="#c9cdd4" /><path d="M1 1h3v6H1zM5 1h3v6H5z" fill="#fff" stroke="#444" /></Ico></ViewButton>
        <Space $w={9} />100%<Space $w={8} />
        <RoundButton aria-label="Уменьшить"><Ico s={8}><path d="M0 4h8" stroke="#333" strokeWidth="2" /></Ico></RoundButton>
        <ZoomSlider type="range" min={0} max={100} defaultValue={50} aria-label="Масштаб" />
        <RoundButton aria-label="Увеличить"><Ico s={8}><path d="M0 4h8M4 0v8" stroke="#333" strokeWidth="2" /></Ico></RoundButton>
        <Space $w={6} />
        <Ico s={12}><path d="M9 0h2v2H9zM9 4h2v2H9zM9 8h2v2H9zM5 4h2v2H5zM5 8h2v2H5zM1 8h2v2H1z" fill="#8b919b" /></Ico>
      </StatusBar>
    </ExcelWindow>
  );
}

function TermToolbars() {
  return (
    <>
      <ToolRow $h={27}>
        <ToolGroup>
          <Grip />
          <Tool $drop aria-label="Новый график"><Ico w={17}><path d="M.5 1.5h12v10H.5z" fill="#eaf4ff" stroke="#3c7fc0" /><path d="M3 3v7M2 9h8" stroke="#777" /><Plus x={9} y={6} /></Ico><Caret c="#000" /></Tool>
          <Tool $drop aria-label="Профили"><Ico w={17}><path d="M4.5 5.5h12v10h-12z" fill="#cfe2f5" stroke="#3c7fc0" /><path d="M.5 1.5h12v10H.5z" fill="#eaf4ff" stroke="#3c7fc0" /><path d="M3 4v5M2 8h8M8 3v4" stroke="#777" /></Ico><Caret c="#000" /></Tool>
          <ToolRule />
          <Tool aria-label="Обзор рынка"><Ico><path d="M.5.5h15v15H.5z" fill="#fff" stroke="#3c7fc0" /><path d="M5 2l3 3H6v3H4V5H2z" fill="#17a81f" /><path d="M11 14l-3-3h2V8h2v3h2z" fill="#e0501a" /></Ico></Tool>
          <Tool aria-label="Окно данных"><Ico><circle cx="8" cy="8" r="5" stroke="#555" strokeWidth="1.5" /><path d="M8 0v6M8 10v6M0 8h6M10 8h6" stroke="#555" strokeWidth="1.5" /></Ico></Tool>
          <Tool aria-label="Навигатор"><Ico w={18}><path d="M1 2h5l1 2h5v6H1z" fill="#f7dc7c" stroke="#b8922a" /><path d="M12 5l1.5 3.5 4 .5-3 2.5 1 4-3.5-2-3.5 2 1-4-3-2.5 4-.5z" fill="#f9c63c" stroke="#b87c14" /></Ico></Tool>
          <Tool aria-label="Терминал"><Ico><path d="M.5 1.5h15v13H.5z" fill="#fff" stroke="#2a6cb8" strokeWidth="1.5" /><path d="M1 2h3v12H1z" fill="#2a6cb8" /><path d="M6 5h8M6 8h8M6 11h8" stroke="#999" strokeDasharray="1 1" /></Ico></Tool>
          <Tool aria-label="Тестер"><Ico><path d="M.5.5h12v13H.5z" fill="#f5f5f5" stroke="#999" /><path d="M3 3v8M6 2v6" stroke="#555" /><circle cx="9" cy="8" r="4" fill="#cfe6fa" stroke="#3c7fc0" strokeWidth="1.5" /><path d="M12 11l3.5 4" stroke="#c98f20" strokeWidth="2.4" /></Ico></Tool>
          <ToolRule />
          <WideTool><Ico w={17}><path d="M1.5.5h7l3 3v10h-10z" fill="#f8f8f8" stroke="#555" /><path d="M3 5h6M3 7h6M3 9h4" stroke="#777" /><Plus x={10} y={7} /></Ico>Новый ордер</WideTool>
          <Tool aria-label="Справочник"><Ico><path d="M1 9l6-7 8 6-6 6z" fill="#f0bb3a" stroke="#a8741a" /><path d="M1 9l8 5 6-6v2l-6 6-8-5z" fill="#d99a22" stroke="#a8741a" strokeWidth=".7" /></Ico></Tool>
          <WideTool><Ico w={17}><path d="M1 7q7-3 15 0l-4 8H5z" fill="#f3c64c" stroke="#b8862a" /><ellipse cx="8" cy="5.5" rx="7.5" ry="3" fill="#5fa8d8" stroke="#2c78a8" /><path d="M4 5q0-4 4-4t4 4z" fill="#8cc6ea" stroke="#2c78a8" /><circle cx="12" cy="11.5" r="4" fill="#e02818" stroke="#fff" /><path d="M10.5 10h3v3h-3z" fill="#fff" /></Ico>Авто-торговля</WideTool>
        </ToolGroup>
        <ToolGroup>
          <Grip />
          <Tool aria-label="Бары"><Axes><path d="M7.5 5v6M6 9.5h2M11.5 2v8M11 3.5h3" stroke="#17a81f" strokeWidth="1.5" /></Axes></Tool>
          <Tool $on aria-label="Свечи"><Axes><path d="M9.5 0v11" stroke="#0b7d14" /><path d="M7.5 2.5h4v6h-4z" fill="#22d022" stroke="#0b7d14" /></Axes></Tool>
          <Tool aria-label="Линия"><Axes><path d="M4 9q5-8 10 0" stroke="#17a81f" strokeWidth="1.3" /></Axes></Tool>
          <ToolRule />
          <Tool aria-label="Увеличить"><Ico><path d="M10 10l5 5" stroke="#c98f20" strokeWidth="3" /><circle cx="6.5" cy="6.5" r="5.5" fill="#cfe6fa" stroke="#2a6cb8" strokeWidth="1.3" /><path d="M4 6.5h5M6.5 4v5" stroke="#2a6cb8" strokeWidth="1.5" /></Ico></Tool>
          <Tool aria-label="Уменьшить"><Ico><path d="M10 10l5 5" stroke="#c98f20" strokeWidth="3" /><circle cx="6.5" cy="6.5" r="5.5" fill="#cfe6fa" stroke="#2a6cb8" strokeWidth="1.3" /><path d="M4 6.5h5" stroke="#2a6cb8" strokeWidth="1.5" /></Ico></Tool>
          <Tool aria-label="Расположить окна"><Ico><path d="M0 0h8v8H0z" fill="#3f9b22" /><path d="M8 0h8v8H8z" fill="#2a5fc8" /><path d="M0 8h8v8H0z" fill="#2a5fc8" /><path d="M8 8h8v8H8z" fill="#3f9b22" /><path d="M1.5 3h5v3h-5zM9.5 3h5v3h-5zM1.5 11h5v3h-5zM9.5 11h5v3h-5z" fill="#fff" /></Ico></Tool>
          <ToolRule />
          <Tool $on aria-label="Автопрокрутка"><Axes><path d="M8 4l5 4-5 4z" fill="#22d022" stroke="#0b7d14" /></Axes></Tool>
          <Tool $on aria-label="Сдвиг графика"><Axes><path d="M8.5 1v11" stroke="#2a6cb8" strokeWidth="1.5" /><path d="M15 7h-5l2-2.5M10 7l2 2.5" stroke="#d04010" strokeWidth="1.5" /></Axes></Tool>
          <ToolRule />
          <Tool $drop aria-label="Индикаторы"><Ico w={17}><path d="M.5.5h7l3 3v10H.5z" fill="#f8f8f8" stroke="#555" /><path d="M5 12q-2-8 3-8" stroke="#555" /><Plus x={10} y={7} /></Ico><Caret c="#000" /></Tool>
          <Tool $drop aria-label="Периоды"><Ico><circle cx="8" cy="8" r="6.5" fill="#eaf4ff" stroke="#1f6fd0" strokeWidth="2.5" /><path d="M8 4v4h3" stroke="#444" /></Ico><Caret c="#000" /></Tool>
          <Tool aria-label="Шаблоны"><Ico><path d="M1.5 1.5h14v13h-14z" fill="#eaf4ff" stroke="#3c7fc0" /><path d="M5.5 5v7M4 10h1M8.5 4v4M11.5 4v6M11 5h3" stroke="#3c7fc0" /></Ico></Tool>
          <Tool $drop aria-label="Список окон"><Ico><path d="M.5 1.5h15v13H.5z" fill="#fff" stroke="#3c7fc0" /><path d="M1 2h14v2H1z" fill="#3c7fc0" /><path d="M2 7q4-2 6 0t6-1" stroke="#a82020" strokeWidth="1.3" /><path d="M1 9h14" stroke="#3c7fc0" /><path d="M2 12q3-2 6 0t6 0" stroke="#17a81f" strokeWidth="1.3" /></Ico><Caret c="#000" /></Tool>
        </ToolGroup>
      </ToolRow>
      <ToolRow $h={26}>
        <ToolGroup>
          <Grip />
          <Tool $on aria-label="Курсор"><Ico><path d="M4 1v12l3-3 2 5 2-1-2-4.5h4z" fill="#555" /></Ico></Tool>
          <Tool aria-label="Перекрестие"><Ico><path d="M8 0v6M8 9v6M0 7.5h6M10 7.5h6" stroke="#555" strokeWidth="1.3" /><path d="M7.5 7h1v1h-1z" fill="#555" /></Ico></Tool>
          <ToolRule />
          <Tool aria-label="Вертикальная линия"><Ico><path d="M8 1v13" stroke="#555" strokeWidth="1.3" /></Ico></Tool>
          <Tool aria-label="Горизонтальная линия"><Ico><path d="M2 7.5h12" stroke="#555" strokeWidth="1.3" /></Ico></Tool>
          <Tool aria-label="Трендовая линия"><Ico><path d="M2 14L14 2" stroke="#555" strokeWidth="1.3" /></Ico></Tool>
          <Tool aria-label="Канал"><Ico><path d="M1 11l10-8M2 14L14 4M3 6l-1 7M6 3L5 11M9 2L8 9M12 1l-1 6" stroke="#444" /><path d="M12.5 10v5.5M12 10.5h3.5M12 13h3M12 15.5h3.5" stroke="#444" /></Ico></Tool>
          <Tool aria-label="Фибоначчи"><Ico><path d="M1 1.5h14M1 5.5h14M1 9.5h9M1 13.5h9" stroke="#555" strokeDasharray="1 1" /><path d="M12.5 9v6.5M12 9.5h3.5M12 12.5h3" stroke="#444" /></Ico></Tool>
          <Tool aria-label="Текст"><Ico><path d="M4 13L8 3l4 10M5.5 9.5h5" stroke="#555" strokeWidth="1.8" /></Ico></Tool>
          <Tool aria-label="Метка"><Ico><path d="M1.5 1.5h13v13h-13z" stroke="#555" strokeDasharray="1 1" /><path d="M4 5h8M8 5v7" stroke="#555" strokeWidth="2" /></Ico></Tool>
          <Tool aria-label="Треугольник"><Ico><path d="M8 3l7 9H1z" fill="#888" stroke="#555" /></Ico></Tool>
          <Tool aria-label="Прямоугольник"><Ico><rect x="1.5" y="3.5" width="13" height="9" rx="1" fill="#999" stroke="#555" /></Ico></Tool>
          <Tool $drop aria-label="Стрелки"><Ico><path d="M1 4l3-3 3 3-3 3zM10 11l3-3 3 3-3 3z" fill="#444" /><path d="M4 6l4 4M9 5l2-2M8 10l4 1" stroke="#444" strokeWidth="1.5" /></Ico><Caret c="#000" /></Tool>
        </ToolGroup>
        <ToolGroup>
          <Grip />
          <Period>M1</Period><ToolRule />
          <Period>M5</Period><Period>M15</Period><Period>M30</Period><ToolRule />
          <Period>H1</Period><Period>H4</Period><Period $on>D1</Period><Period>W1</Period><Period>MN</Period><ToolRule />
        </ToolGroup>
      </ToolRow>
    </>
  );
}

function TradingTerminal() {
  return (
    <Terminal>
      <TermTitle>
        <Ico><path d="M0 0h16v16H0z" fill="#111" /><path d="M0 5q4-5 8-2t8-3" stroke="#e03020" strokeWidth="2" /><path d="M0 9q4-5 8-2t8-3" stroke="#f08020" strokeWidth="2" /><path d="M0 12q4-4 8-1.5t8-3" stroke="#d8d020" strokeWidth="1.5" /><path d="M0 15q4-4 8-1.5t8-3" stroke="#30c030" strokeWidth="2" /></Ico>
        <TermName>6019695: Alpari-Standard2 - [EURUSD,Daily]</TermName>
        <TermCaption>
          <CaptionButton $w={28} $tone="glass" aria-label="Свернуть"><WinMin /></CaptionButton>
          <CaptionButton $w={27} $tone="glass" aria-label="Развернуть"><WinMax /></CaptionButton>
          <CaptionButton $w={47} $tone="glass" aria-label="Закрыть"><WinClose /></CaptionButton>
        </TermCaption>
      </TermTitle>
      <Client>
        <MenuBar>
          <Ico s={15}><path d="M1.5 1.5h10v8h-10zM4.5 5.5h10v8h-10z" fill="#eaf2ff" stroke="#5c8fe0" /><path d="M1 2h10" stroke="#5c8fe0" strokeWidth="2" /><path d="M6 9l2 3 2-3 2 3 1-2" stroke="#5c8fe0" /></Ico>
          {['Файл', 'Вид', 'Вставка', 'Графики', 'Сервис', 'Окно', 'Справка'].map(m => <MenuItem key={m}>{m}</MenuItem>)}
          <MdiButtons>
            <MdiButton aria-label="Свернуть окно"><Ico s={8}><path d="M1 6h6" stroke="#8397ac" strokeWidth="2" /></Ico></MdiButton>
            <MdiButton aria-label="Восстановить окно"><Ico s={8}><path d="M2.5 1h5v3.5M.5 3.5h5v4h-5z" stroke="#8397ac" /></Ico></MdiButton>
            <MdiButton aria-label="Закрыть окно"><Ico s={8}><path d="M1 1l6 6M7 1L1 7" stroke="#8397ac" strokeWidth="2" /></Ico></MdiButton>
          </MdiButtons>
        </MenuBar>
        <TermToolbars />
        <ChartFrame>
          <Pane>
            <PriceChart />
            <PaneCaption><Caret c="#fff" w={7} />EURUSD,Daily{'   '}1.11799 1.11872 1.11433 1.11787</PaneCaption>
          </Pane>
          <PriceAxis>
            {prices.map(p => <Price key={p}>1.{p}</Price>)}
            {tags.map(([t, y, bg]) => <PriceTag key={t} $bg={bg} style={{ top: y }}>{t}</PriceTag>)}
          </PriceAxis>
          <Pane>
            <svg viewBox="768 889 842 103" preserveAspectRatio="none" shapeRendering="crispEdges" fill="none" role="img" aria-label="Sto(14,3,3)">
              {[800.5, 1136.5, 1536.5].map(x => <path key={x} d={`M${x} 889V992`} stroke="#fff" strokeDasharray="5 4" />)}
              <path d="M768 910.5H1610M768 971.5H1610" stroke="#c0c0c0" strokeDasharray="5 4" />
              <polyline points={stoRed} stroke="#f00" />
              <polyline points={stoCyan} stroke="#0ff" />
            </svg>
            <PaneCaption>Sto(14,3,3) 70.9911 75.5953</PaneCaption>
          </Pane>
          <PriceAxis>
            {levels.map(([t, y]) => <LevelTag key={t} style={{ top: y }}>{t}</LevelTag>)}
          </PriceAxis>
          <DateAxis>{dates.map(d => <DateLabel key={d}>{d}</DateLabel>)}</DateAxis>
        </ChartFrame>
        <SymbolTabs>
          <SymbolTab $on>EURUSD,Daily</SymbolTab>
          {['USDJPY', 'GBPUSD', 'USDCAD', 'AUDUSD', 'USDCHF', 'NZDUSD', '_DXY', 'XAUUSD'].map(s => <SymbolTab key={s}>{s},Daily</SymbolTab>)}
          <ScrollArrow aria-label="Назад" $w={22} $h={20}><svg width="4" height="7" viewBox="0 0 4 7"><path d="M4 0v7L0 3.5z" fill="#888" /></svg></ScrollArrow>
          <ScrollArrow aria-label="Вперёд" $w={16} $h={20}><svg width="4" height="7" viewBox="0 0 4 7"><path d="M0 0v7l4-3.5z" fill="#000" /></svg></ScrollArrow>
        </SymbolTabs>
        <TermStatus>
          <StatusCell $w={217}>Для справки, нажмите F1</StatusCell>
          <StatusCell $w={213}>Основной КАР</StatusCell>
          <StatusCell $w={71} /><StatusCell $w={71} /><StatusCell $w={68} /><StatusCell $w={70} /><StatusCell $w={66} />
          <Space $w={5} />
          <Ico s={14} w={24}><path d="M1 0v14M4 0v14M7 0v14M10 0v14" stroke="#567a14" strokeWidth="2" /><path d="M13 5v9M16 3v11M19 1v13M22 0v14" stroke="#28506e" strokeWidth="2" strokeDasharray="2 1" /></Ico>
          <Space $w={4} />21783/10 kb
        </TermStatus>
      </Client>
    </Terminal>
  );
}

export default function App() {
  return (
    <>
      <GlobalStyle />
      <Desktop>
        <Workspace>
          <Excel />
          <TradingTerminal />
          <Wallpaper>
            <WallpaperNote $gap={576}>в</WallpaperNote>
            <WallpaperNote $gap={235}>я</WallpaperNote>
            <WallpaperNote $gap={0}>и</WallpaperNote>
          </Wallpaper>
        </Workspace>
        <TaskbarEdge />
      </Desktop>
    </>
  );
}
